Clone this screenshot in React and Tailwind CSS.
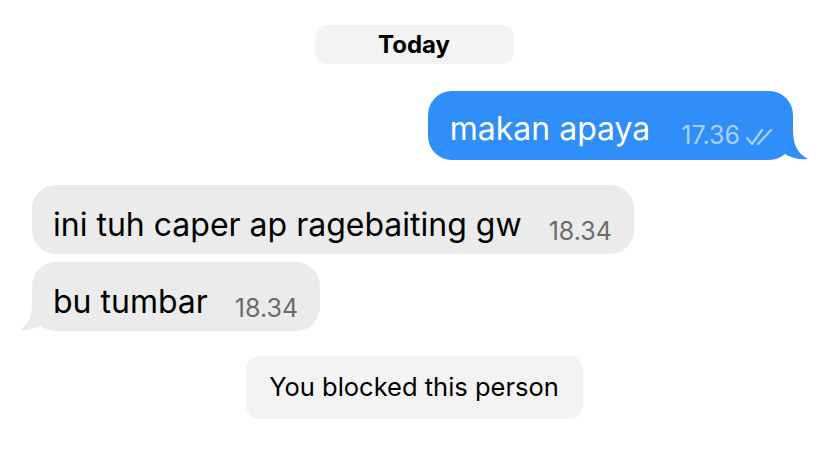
const font = { fontFamily: 'Inter, "Liberation Sans", sans-serif' };

function DoubleCheck() {
  return (
    <svg width="30" height="22" viewBox="0 0 30 22" fill="none" stroke="#a9d0fb" strokeWidth="2.2" strokeLinecap="round" strokeLinejoin="round">
      <path d="M2 12 L7 18 L17 4" />
      <path d="M13 18 L26 4" />
    </svg>
  );
}

function TailLeft() {
  return (
    <svg className="absolute -left-[12px] bottom-0" width="26" height="30" viewBox="0 0 26 30">
      <path d="M12 0 C12 14 9 23 0 29 C7 30 15 28 21 24 L26 24 L26 0 Z" fill="#ebebeb" />
    </svg>
  );
}

function TailRight() {
  return (
    <svg className="absolute -right-[15px] bottom-0" width="28" height="30" viewBox="0 0 28 30">
      <path d="M13 0 C13 14 17 23 28 29 C20 30 11 28 5 24 L0 24 L0 0 Z" fill="#2f8ef7" />
    </svg>
  );
}

function Incoming({ text, time, tail }) {
  return (
    <div className="relative self-start">
      {tail && <TailLeft />}
      <div className="relative flex items-end h-[69px] rounded-[24px] bg-[#ebebeb] pl-[21px] pr-[22px] pb-[12px]">
        <span className="text-[32px] leading-none text-black pb-[1px]">{text}</span>
        <span className="ml-[27px] text-[25px] leading-none text-[#6b6b6b] -mb-[2px]">{time}</span>
      </div>
    </div>
  );
}

export default function App() {
  return (
    <div className="w-[828px] h-[475px] bg-white flex flex-col pt-[25px] pl-[32px] pr-[35px]" style={font}>
      <div className="self-center flex items-center justify-center w-[199px] h-[39px] ml-[3px] rounded-[12px] bg-[#f3f3f3] text-[24px] font-bold text-black">
        Today
      </div>

      <div className="relative self-end mt-[27px]">
        <TailRight />
        <div className="relative flex items-end h-[69px] rounded-[24px] bg-[#2f8ef7] pl-[22px] pr-[18px] pb-[14px]">
          <span className="text-[32px] leading-none text-white pb-[1px]">makan apaya</span>
          <span className="ml-[31px] text-[25px] leading-none text-[#a9d0fb] -mb-[2px]">17.36</span>
          <span className="ml-[5px] -mb-[2px]">
            <DoubleCheck />
          </span>
        </div>
      </div>

      <div className="flex flex-col gap-[8px] mt-[25px]">
        <Incoming text="ini tuh caper ap ragebaiting gw" time="18.34" />
        <Incoming text="bu tumbar" time="18.34" tail />
      </div>

      <div className="self-center mt-[25px] ml-[3px] flex items-center justify-center w-[337px] h-[63px] rounded-[14px] bg-[#f3f3f3] text-[25.5px] text-black">
        You blocked this person
      </div>
    </div>
  );
}
